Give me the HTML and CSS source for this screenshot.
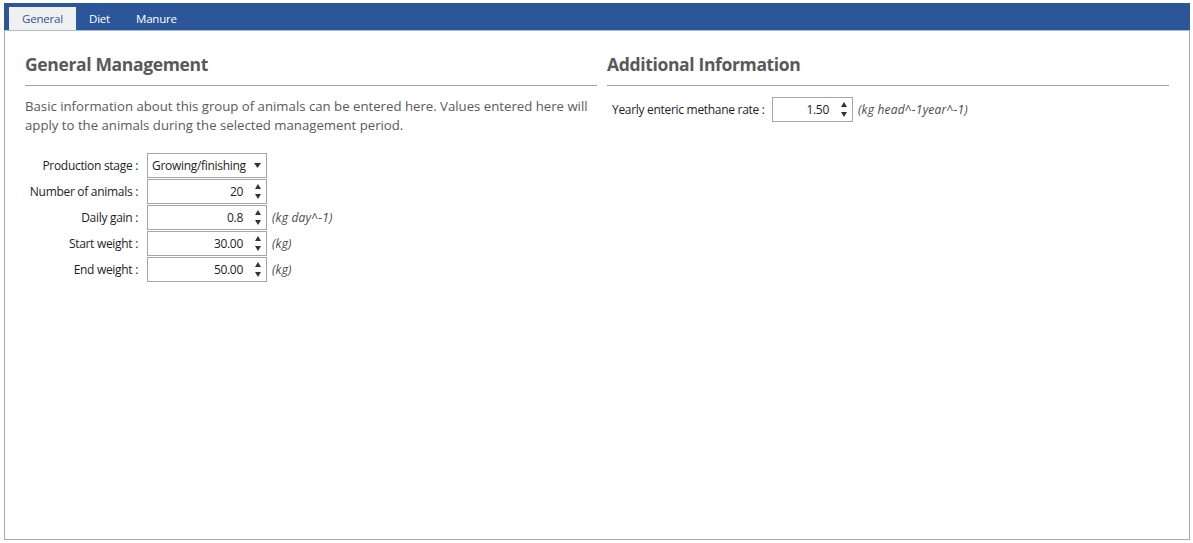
FILE: index.html
```html
<!DOCTYPE html>
<html>
<head>
<meta charset="utf-8">
<link rel="stylesheet" href="styles.css">
</head>
<body>
<div class="window">
  <div class="tabbar">
    <div class="tab selected">General</div>
    <div class="tab">Diet</div>
    <div class="tab">Manure</div>
  </div>
  <div class="content">
    <section class="col left">
      <h2 class="heading">General Management</h2>
      <p class="desc">Basic information about this group of animals can be entered here. Values entered here will apply to the animals during the selected management period.</p>
      <div class="form">
        <div class="row">
          <span class="label">Production stage :</span>
          <div class="box select"><span class="val">Growing/finishing</span><svg class="drop" width="7" height="5" viewBox="0 0 7 5"><path d="M0 0H7L3.5 5Z" fill="#333"/></svg></div>
        </div>
        <div class="row">
          <span class="label">Number of animals :</span>
          <div class="box num"><span class="val">20</span><span class="spin"><i class="up"></i><i class="down"></i></span></div>
        </div>
        <div class="row">
          <span class="label">Daily gain :</span>
          <div class="box num"><span class="val">0.8</span><span class="spin"><i class="up"></i><i class="down"></i></span></div>
          <span class="unit">(kg day^-1)</span>
        </div>
        <div class="row">
          <span class="label">Start weight :</span>
          <div class="box num"><span class="val">30.00</span><span class="spin"><i class="up"></i><i class="down"></i></span></div>
          <span class="unit">(kg)</span>
        </div>
        <div class="row">
          <span class="label">End weight :</span>
          <div class="box num"><span class="val">50.00</span><span class="spin"><i class="up"></i><i class="down"></i></span></div>
          <span class="unit">(kg)</span>
        </div>
      </div>
    </section>
    <section class="col right">
      <h2 class="heading">Additional Information</h2>
      <div class="row2">
        <span class="label2">Yearly enteric methane rate :</span>
        <div class="box num small"><span class="val">1.50</span><span class="spin"><i class="up"></i><i class="down"></i></span></div>
        <span class="unit">(kg head^-1year^-1)</span>
      </div>
    </section>
  </div>
</div>
</body>
</html>
```

FILE: styles.css
```css
html, body {
  margin: 0;
  padding: 0;
  background: #ffffff;
}
body {
  font-family: "Open Sans", "Noto Sans", sans-serif;
  color: #1e1e1e;
}
.window {
  margin: 3px 3px 0 4px;
  height: 537px;
  border: 1px solid #a9a9a9;
  border-top: none;
  box-sizing: border-box;
  display: flex;
  flex-direction: column;
}
.tabbar {
  height: 27px;
  background: #2b579a;
  border-bottom: 1px solid #a8bcd8;
  margin: 0 -1px;
  display: flex;
  align-items: flex-end;
  padding-left: 5px;
  box-sizing: content-box;
}
.tab {
  height: 23px;
  line-height: 23px;
  font-size: 11.5px;
  color: #ffffff;
  padding: 0 13px;
  letter-spacing: -0.2px;
}
.tab.selected {
  background: #f0f0f0;
  color: #2b579a;
  width: 41px;
}
.content {
  display: flex;
  gap: 10px;
  padding: 0 20px 0 20px;
}
.col.left { width: 572px; }
.col.right { width: 562px; }
.heading {
  margin: 22px 0 0 0;
  font-size: 17.5px;
  font-weight: 700;
  color: #595959;
  letter-spacing: -0.35px;
  line-height: 22px;
  border-bottom: 1px solid #a0a0a0;
  box-sizing: border-box;
  height: 33px;
}
.desc {
  margin: 11px 0 0 0;
  width: 570px;
  font-size: 13.2px;
  line-height: 19px;
  color: #5a5a5a;
  letter-spacing: 0;
}
.form {
  margin-top: 18px;
  display: flex;
  flex-direction: column;
  gap: 1px;
}
.row {
  display: flex;
  align-items: center;
  height: 25px;
}
.label {
  width: 113px;
  text-align: right;
  font-size: 12px;
  letter-spacing: -0.3px;
  color: #1e1e1e;
  margin-right: 9px;
  white-space: nowrap;
}
.box {
  width: 120px;
  height: 25px;
  border: 1px solid #a6a6a6;
  box-sizing: border-box;
  display: flex;
  align-items: center;
  font-size: 12px;
  letter-spacing: -0.3px;
  color: #1e1e1e;
  background: #fff;
}
.box.select .val {
  flex: 1;
  padding-left: 4px;
}
.drop {
  display: block;
  margin-right: 5px;
  margin-top: -1px;
}
.box.num .val {
  flex: 1;
  text-align: right;
  padding-right: 8px;
}
.spin {
  width: 14px;
  height: 23px;
  display: flex;
  flex-direction: column;
  justify-content: center;
  align-items: center;
  gap: 5px;
  margin-right: 1px;
}
.spin i {
  display: block;
  width: 0;
  height: 0;
  border-left: 3px solid transparent;
  border-right: 3px solid transparent;
}
.spin i.up { border-bottom: 5px solid #333; }
.spin i.down { border-top: 5px solid #333; }
.unit {
  font-style: italic;
  font-size: 12px;
  letter-spacing: 0.2px;
  color: #4a4a4a;
  margin-left: 5px;
  white-space: nowrap;
}
.row2 {
  margin-top: 10px;
  display: flex;
  align-items: center;
  height: 26px;
  padding-left: 5px;
}
.label2 {
  font-size: 12px;
  letter-spacing: -0.3px;
  width: 160px;
  color: #1e1e1e;
}
.box.small { width: 81px; }
```
